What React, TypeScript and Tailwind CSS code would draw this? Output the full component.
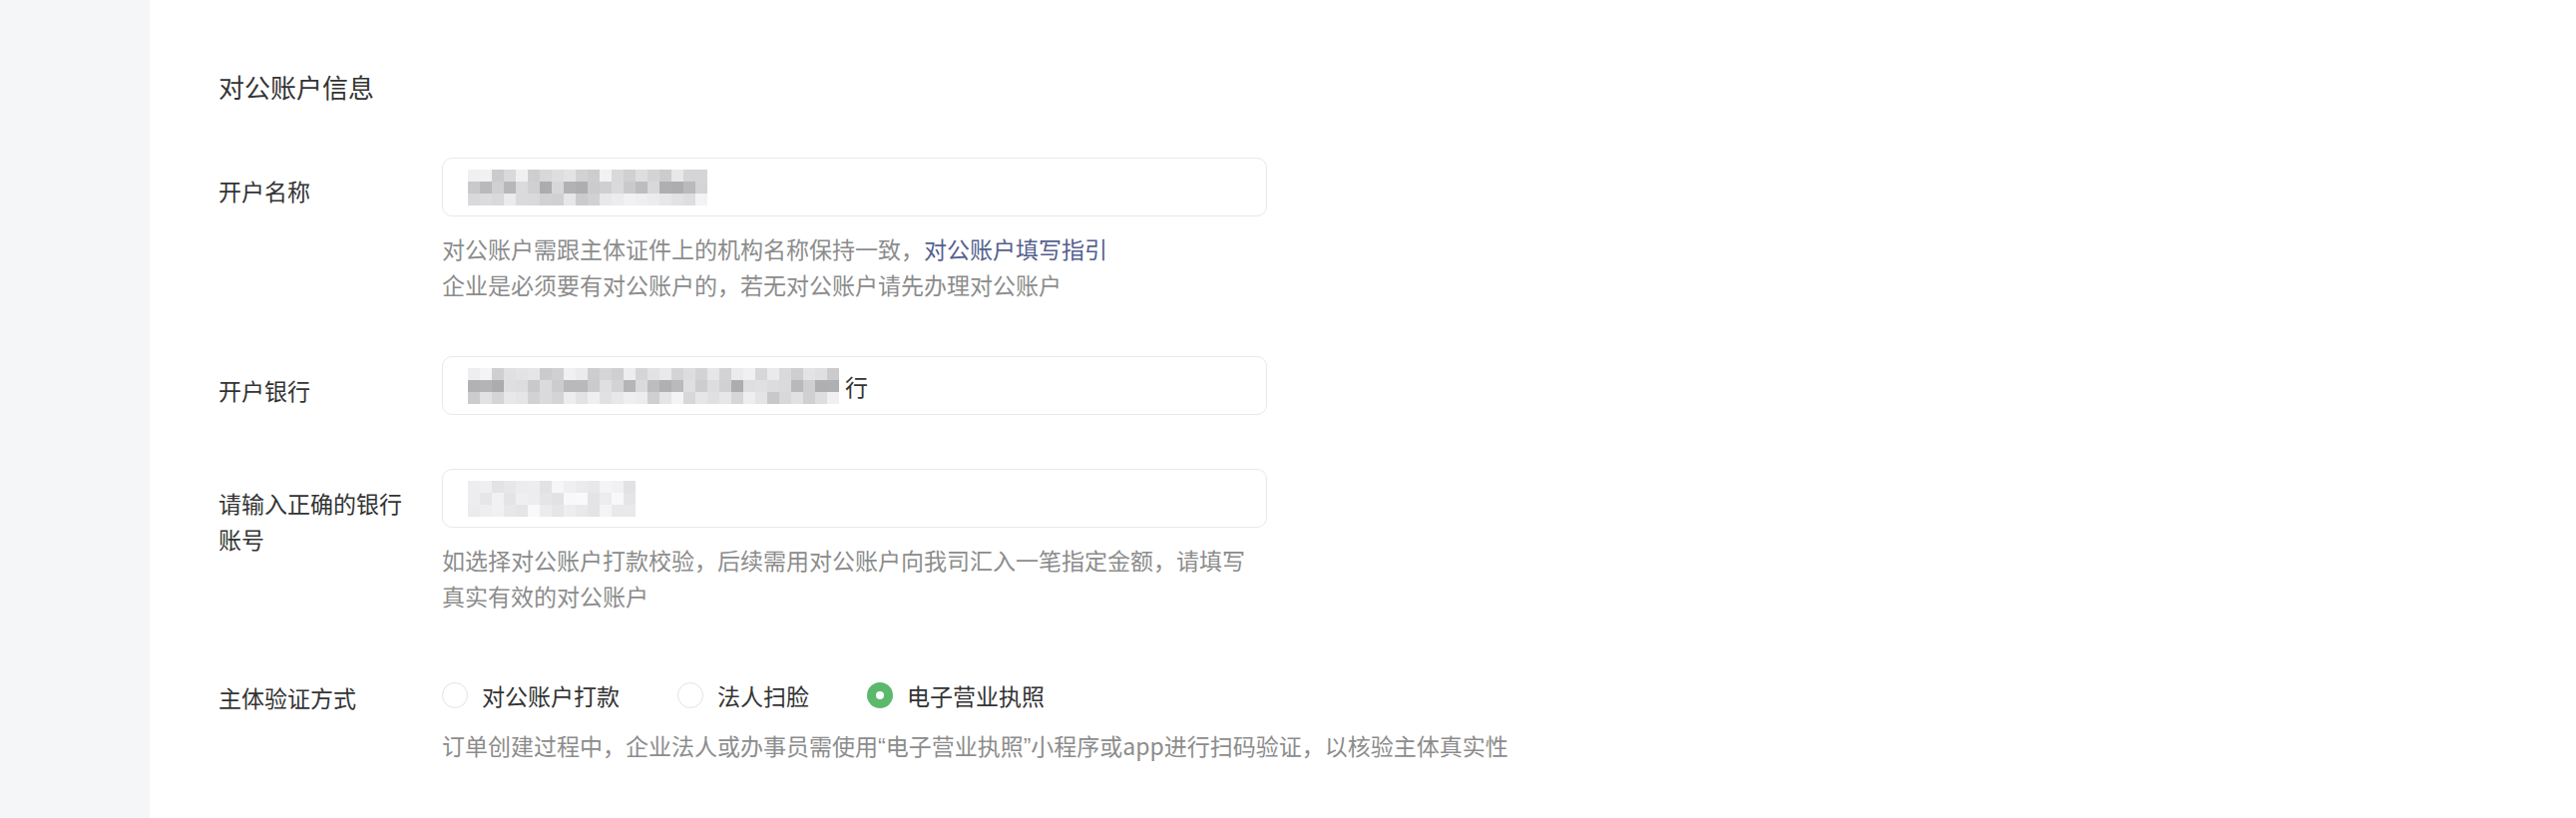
import React from 'react';

// pixelated (redacted) value shown inside the inputs
const Mosaic = ({ cols, seed, light = false }: { cols: number; seed: number; light?: boolean }) => {
  let s = seed;
  const rnd = () => {
    s = (s * 9301 + 49297) % 233280;
    return s / 233280;
  };
  const cells: { x: number; y: number; c: string }[] = [];
  for (let r = 0; r < 3; r++) {
    for (let c = 0; c < cols; c++) {
      const v = rnd();
      let g = light ? 225 + Math.floor(v * 25) : 200 + Math.floor(v * 45);
      if (!light && r === 1 && v > 0.55) g = 150 + Math.floor(v * 40);
      cells.push({ x: c * 12, y: r * 12, c: `rgb(${g},${g},${g + 3})` });
    }
  }
  return (
    <svg width={cols * 12} height={36} className="block">
      {cells.map((cell, i) => (
        <rect key={i} x={cell.x} y={cell.y} width={12} height={12} fill={cell.c} />
      ))}
    </svg>
  );
};

const Radio = ({ label, checked }: { label: string; checked?: boolean }) => (
  <label className="flex items-center mr-[58px]">
    {checked ? (
      <span className="w-[26px] h-[26px] rounded-full bg-[#5cb96c] flex items-center justify-center">
        <span className="w-[8px] h-[8px] rounded-full bg-white" />
      </span>
    ) : (
      <span className="w-[26px] h-[26px] rounded-full border-[1.5px] border-[#e3e3e3] bg-white" />
    )}
    <span className="ml-[14px] text-[#333333]">{label}</span>
  </label>
);

const Q = ({ children }: { children: React.ReactNode }) => (
  <span className="font-['Liberation_Sans',sans-serif]">{children}</span>
);

export default function App() {
  return (
    <div className="flex w-full h-[820px] font-['Noto_Sans_CJK_SC','Noto_Sans',sans-serif] text-[23px]">
      <div className="w-[150px] bg-[#f5f6f8] shrink-0" />
      <div className="flex-1 bg-white pl-[69px]">
        <div className="pt-[69px] text-[26px] leading-[36px] text-[#333333]">对公账户信息</div>

        {/* 开户名称 */}
        <div className="flex mt-[53px]">
          <div className="w-[224px] pr-[30px] pt-[15px] leading-[36px] text-[#333333]">开户名称</div>
          <div>
            <div className="w-[827px] h-[59px] border-[1.5px] border-[#e8e8e8] rounded-[10px] flex items-center pl-[25px]">
              <Mosaic cols={20} seed={17} />
            </div>
            <div className="mt-[14px] leading-[36px] text-[#8c8c8c]">
              <div>
                对公账户需跟主体证件上的机构名称保持一致，<span className="text-[#55608f]">对公账户填写指引</span>
              </div>
              <div>企业是必须要有对公账户的，若无对公账户请先办理对公账户</div>
            </div>
          </div>
        </div>

        {/* 开户银行 */}
        <div className="flex mt-[54px]">
          <div className="w-[224px] pr-[30px] pt-[16px] leading-[36px] text-[#333333]">开户银行</div>
          <div className="w-[827px] h-[59px] border-[1.5px] border-[#e8e8e8] rounded-[10px] flex items-center pl-[25px]">
            <Mosaic cols={31} seed={41} />
            <span className="ml-[6px] text-[#333333] leading-[36px]">行</span>
          </div>
        </div>

        {/* 银行账号 */}
        <div className="flex mt-[54px]">
          <div className="w-[224px] pr-[30px] pt-[16px] leading-[36px] text-[#333333]">请输入正确的银行账号</div>
          <div>
            <div className="w-[827px] h-[59px] border-[1.5px] border-[#e8e8e8] rounded-[10px] flex items-center pl-[25px]">
              <Mosaic cols={14} seed={7} light />
            </div>
            <div className="mt-[14px] max-w-[815px] leading-[36px] text-[#8c8c8c]">
              如选择对公账户打款校验，后续需用对公账户向我司汇入一笔指定金额，请填写真实有效的对公账户
            </div>
          </div>
        </div>

        {/* 主体验证方式 */}
        <div className="flex mt-[53px]">
          <div className="w-[224px] pr-[30px] pt-[13px] leading-[36px] text-[#333333]">主体验证方式</div>
          <div>
            <div className="h-[58px] flex items-center">
              <Radio label="对公账户打款" />
              <Radio label="法人扫脸" />
              <Radio label="电子营业执照" checked />
            </div>
            <div className="mt-[3px] leading-[36px] text-[#8c8c8c] whitespace-nowrap">
              订单创建过程中，企业法人或办事员需使用<Q>“</Q>电子营业执照<Q>”</Q>小程序或app进行扫码验证，以核验主体真实性
            </div>
          </div>
        </div>
      </div>
    </div>
  );
}
